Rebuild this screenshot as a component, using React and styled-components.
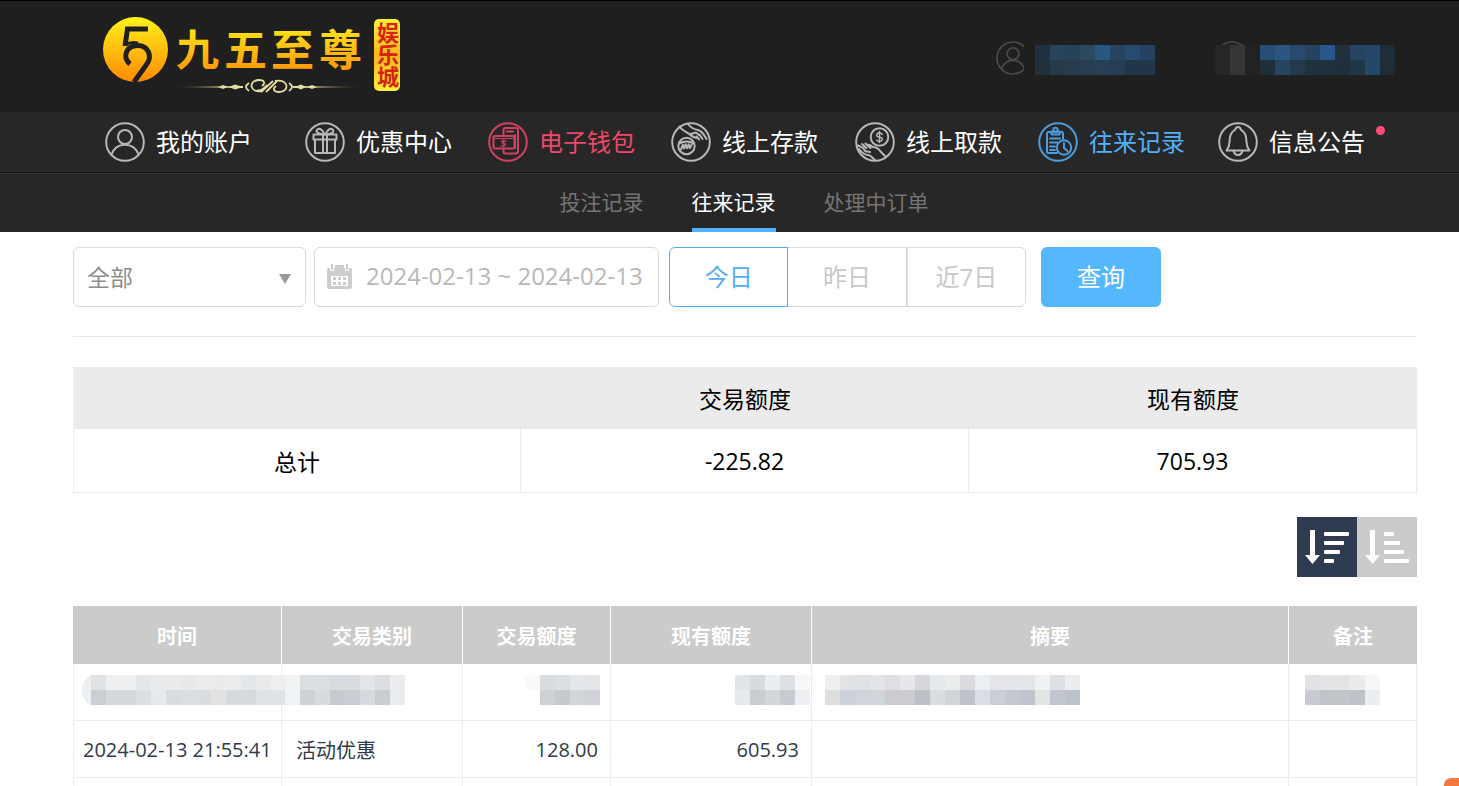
import { useState } from 'react';
import styled, { createGlobalStyle } from 'styled-components';

const NAV_ITEMS = [
  { label: '我的账户', icon: 'user' },
  { label: '优惠中心', icon: 'gift' },
  { label: '电子钱包', icon: 'wallet', color: '#f0476a' },
  { label: '线上存款', icon: 'deposit' },
  { label: '线上取款', icon: 'withdraw' },
  { label: '往来记录', icon: 'record', color: '#53b1fb' },
  { label: '信息公告', icon: 'bell', hasNews: true },
];

const TABS = ['投注记录', '往来记录', '处理中订单'];
const RANGES = ['今日', '昨日', '近7日'];

// widths are shared out in proportion over the full table width
const COLUMNS = [
  { title: '时间', width: 209 },
  { title: '交易类别', width: 181 },
  { title: '交易额度', width: 148, align: 'right' },
  { title: '现有额度', width: 201, align: 'right' },
  { title: '摘要', width: 477 },
  { title: '备注', width: 128 },
];

// every mosaic is two rows of colours, one entry per block
const ACCOUNT_BLOCKS = [
  '203040 27445c 264258 2b4a5e 295780 264460 264b73 254260',
  '22303a 263a4a 263c4e 273e50 264056 263e54 22364a 22364a',
];

const BALANCE_BLOCKS = [
  '262626 363636 222222 274e74 2a5680 274a6e 254260 28588a 20303c 264462 26466a 202e3c',
  '262626 363636 222222 202e3a 264460 243a4a 20323e 20323e 20303a 22364a 264868 202c38',
];

const HIDDEN_ROW = [
  {
    inset: 8,
    lead: '#eeeff1',
    rows: [
      'e0e3e5 efefef eeeff0 e3e7ea e9eaeb e9ebec e8e9ea ececec e9ebec eaeced e4e7e9 e8eaec eceef0',
      'c9cfd4 d6d9dc d4d9dd dbdfe2 e7e9ea d9dcdf dadee0 dadde0 e3e2e0 d6dadd d5dadf dfe3e6 e0e3e6',
    ],
  },
  {
    inset: 3,
    rows: [
      'f1f2f2 dcdfe2 dcdfe1 d8dbdf d9dce0 e3e5e8 dadee2 ececef',
      'f0f2f3 ced2d6 d7dbdf c7cbd0 c7cdd2 d6dade c9cdd2 eaecef',
    ],
  },
  {
    inset: 10,
    rows: ['fafafa d9dcdf d9dfe2 e5e8ea e3e5e8', 'ffffff ced1d3 c4cacf d2d6d8 cfd2d7'],
  },
  {
    inset: 1,
    rows: ['e0e4e6 d8dbde ebeef0 dde0e4 f6f7f9', 'e8e9eb c9cdd1 d2d7dc c8cbd1 eceef2'],
  },
  {
    inset: 13,
    rows: [
      'eeeeef e1e3e5 dfe2e4 e2e4e7 dedfe2 e6e7ea d5d7db e6e9ec ebecec d9dbe0 eceff2 e3e5e9 e3e5e8 e3e6e9 f0f1f2 dde0e4 ebedf0',
      'dddddd cdd2da d0d5dc d0d6da cccccf cacccf bdc0c6 d9dce1 d3d4d8 bfc3c9 d9dfe5 cacfd6 c3c9cf bfc5cc e3e4e4 c1c7cd bdc3ca',
    ],
  },
  {
    inset: 16,
    rows: ['e0e2e5 e2e4e6 e2e4e6 eaebed f6f7f9', 'c8cbd2 bfc4c9 c0c6c9 bdc3c8 ecedf0'],
  },
];

const ICONS = {
  user: (
    <>
      <circle cx="20" cy="15" r="7" />
      <path d="M6.5 32.5C9 26 14 22.8 20 22.8S31 26 33.5 32.5" />
    </>
  ),
  gift: (
    <>
      <path d="M8.5 12.5h23v5h-23zM10 17.5h20V31H10zM18 12.5V31M22 12.5V31" />
      <path d="M18.5 12.5C12 12 10.5 9.5 12.5 7.5S18 8 19.5 12.5M21.5 12.5C28 12 29.5 9.5 27.5 7.5S22 8 20.5 12.5" />
    </>
  ),
  wallet: (
    <>
      <path d="M15.5 13V8q0-2 2-2h10.500q2 0 2 2v21.500q0 2-2 2H17.500q-2 0-2-2V27" />
      <path d="M19 9.5h6M27 13v13" />
      <rect x="5.5" y="14" width="21" height="12.5" rx="1.5" />
      <path d="M5.5 16.5h21M18 19.3q-3-1.6-4 0t1.5 2 1.5 2-3.8.4M15.7 17.8v7" strokeWidth="1.2" />
    </>
  ),
  deposit: (
    <>
      <circle cx="15.5" cy="24" r="8.2" />
      <path d="M8 21.5q7.5-4 15.2 0M10 27.5l1.8-5 1.2 4 1.8-4.3 1.2 4 1.800-4 1 4 1.800-3.500" />
      <path d="M8.5 4.5C12 10 16 9.5 19 12.5c2 2 5.5 3.5 8 3.5M17 2c3 4 7 5.5 10 6 4 .8 6 4.500 8.500 9M19.500 12l5.500-1.500 3.500 3M25.500 14.500l2.500 3M28.500 12.500l3 4.500" />
    </>
  ),
  withdraw: (
    <>
      <circle cx="24.5" cy="15" r="8.8" />
      <path d="M27.3 12.3q-3.5-2.8-5.2-.3t2.5 3.2 2.2 3.2-5-.2M24.5 9.5v11" strokeWidth="1.5" />
      <path d="M3 23.5l5 2.3 2.5 3.5 4.500.7M7 22l4.500 4M10.500 21.500l5 4.500M13 23q2-1 4.500 2 5 0 8 4.500l4.500 4.500M4 27q4 6 11 6.500l5 4.500" />
    </>
  ),
  record: (
    <>
      <path d="M19 31H10.500Q9 31 9 29.500v-18Q9 10 10.500 10H14M21 10h2.500q1.500 0 1.500 1.500V17M13.500 9.500h8V12.500h-8z" />
      <circle cx="17.5" cy="8" r="2.2" />
      <path d="M12 16.5h10M12 20.5h7M12 24.5h5M12 28h5" />
      <circle cx="26" cy="25.5" r="7.2" />
      <path d="M26 21v5l3.5 3" />
    </>
  ),
  bell: (
    <>
      <path d="M8.500 28.500q3-4 3-8.500 0-9.500 5.500-12.200 1-2.800 3-2.800t3 2.800q5.500 2.700 5.500 12.200 0 4.500 3 8.500z" />
      <path d="M15.500 28.800q1 4.200 4.500 4.200t4.500-4.200" />
    </>
  ),
};

const CircleIcon = ({ name }) => (
  <IconSvg viewBox="0 0 40 40" aria-hidden="true">
    <circle cx="20" cy="20" r="18.8" />
    {ICONS[name]}
  </IconSvg>
);

const Mosaic = ({ rows, lead }) => {
  const colors = rows.map((row) => row.split(' '));
  const start = lead ? 9 : 0;
  const width = colors[0].length * 15 + start;

  return (
    <MosaicSvg width={width} height="30" viewBox={`0 0 ${width} 30`} aria-hidden="true">
      {lead && <path d="M9 0C3 3 0 9 0 15s3 12 9 15z" fill={lead} />}
      {colors.map((row, y) => row.map((color, x) => (
        <rect key={`${x}-${y}`} x={start + x * 15} y={y * 15} width="15" height="15" fill={`#${color}`} />
      )))}
    </MosaicSvg>
  );
};

const Logo = () => (
  <LogoSvg viewBox="0 0 300 80" role="img" aria-label="九五至尊娱乐城">
    <defs>
      <linearGradient id="gold" x1="0" y1="0" x2="0" y2="1">
        <stop offset="0" stopColor="#fff21a" />
        <stop offset="0.5" stopColor="#ffbe10" />
        <stop offset="1" stopColor="#ff8a00" />
      </linearGradient>
      <linearGradient id="plate" x1="0" y1="0" x2="0" y2="1">
        <stop offset="0" stopColor="#fff23a" />
        <stop offset="0.5" stopColor="#f7b51c" />
        <stop offset="1" stopColor="#fff23a" />
      </linearGradient>
      <linearGradient id="line" x1="0" y1="0" x2="1" y2="0">
        <stop offset="0" stopColor="#c9b87c" stopOpacity="0.3" />
        <stop offset="0.3" stopColor="#e9dfa4" />
        <stop offset="0.7" stopColor="#e9dfa4" />
        <stop offset="1" stopColor="#c9b87c" stopOpacity="0.3" />
      </linearGradient>
    </defs>
    <circle cx="32.5" cy="32.5" r="32.5" fill="url(#gold)" />
    <g fill="none" stroke="#1f1f1f" strokeWidth="5">
      <path d="M45 12H24.500L22 29" />
      <path d="M22 28C26 25.500 31 25 35 26" strokeWidth="3" />
      <path d="M27 47C19 40 23 29 34 28.500S50 39 43.500 47.500L31 65" />
    </g>
    <g fill="url(#gold)" fontSize="43" fontWeight="700">
      <text x="73" y="49">九</text>
      <text x="121" y="49">五</text>
      <text x="168" y="49">至</text>
      <text x="216" y="49">尊</text>
    </g>
    <path d="M74 70L140 69v2zM190 69l66 1-66 1z" fill="url(#line)" />
    <g fill="none" stroke="#e6dca6" strokeWidth="1.8">
      <path d="M146 74q-6-4 0-8M186 66q6 4 0 8" />
      <path d="M160 74c-14 3-15-11-4-11 5 0 7 3 3 6M172 64c14-3 15 11 4 11-5 0-7-3-3-6M158 75L170 64M163 75l11-11M154 73q4 2 10-5" />
    </g>
    <path d="M115 70l5-2 5 2-5 2zM126 70l6-2.500 8 2.500-8 2.500zM214 70l-5-2-5 2 5 2zM203 70l-5-2.500-6 2.500 6 2.500z" fill="#e6dca6" />
    <rect x="271" y="2" width="26" height="72" rx="5" fill="url(#plate)" />
    <VerticalText x="284" y="5">娱乐城</VerticalText>
  </LogoSvg>
);

const CalendarIcon = () => (
  <CalendarSvg viewBox="0 0 25 26" aria-hidden="true">
    <path d="M2 4h21q2 0 2 2v17q0 2-2 2H2q-2 0-2-2V6q0-2 2-2z" fill="#cdcdcd" />
    <path d="M4 12h17v10H4z" fill="#fff" />
    <path d="M3 0h4v7H3zM18 0h4v7h-4z" fill="#fff" />
    <path d="M4 0h2v6H4zM8 1h9v5H8zM19 0h2v6h-2z" fill="#cdcdcd" />
    <path d="M6 13h3v3H6zM11 13h3v3h-3zM16 13h3v3h-3zM6 18h3v3H6zM11 18h3v3h-3zM16 18h3v3h-3z" fill="#cdcdcd" />
  </CalendarSvg>
);

const SortIcon = ({ widths }) => (
  <svg width="60" height="60" viewBox="0 0 60 60" fill="#fff" aria-hidden="true">
    <path d="M13 13h5v25h5l-7.500 9L8 38h5z" />
    {widths.map((width, i) => (
      <rect key={width} x="27" y={15 + i * 9} width={width} height="4" rx="1" />
    ))}
  </svg>
);

const App = () => {
  const [tab, setTab] = useState('往来记录');
  const [range, setRange] = useState('今日');
  const [order, setOrder] = useState('desc');

  return (
    <Page>
      <GlobalStyle />
      <Header>
        <TopBar>
          <a href="#home"><Logo /></a>
          <Account>
            <AccountLink href="#account" aria-label="我的账户">
              <AccountIcon><CircleIcon name="user" /></AccountIcon>
              <Mosaic rows={ACCOUNT_BLOCKS} />
            </AccountLink>
            <AccountLink href="#balance" aria-label="现有额度">
              <AccountIcon $covered><CircleIcon /></AccountIcon>
              <Mosaic rows={BALANCE_BLOCKS} />
            </AccountLink>
          </Account>
        </TopBar>
        <Nav>
          {NAV_ITEMS.map((item) => (
            <NavLink key={item.label} href={`#${item.icon}`} $color={item.color}>
              <CircleIcon name={item.icon} />
              <span>{item.label}</span>
              {item.hasNews && <NewsDot />}
            </NavLink>
          ))}
        </Nav>
        <Tabs>
          {TABS.map((name) => (
            <Tab key={name} $active={name === tab} onClick={() => setTab(name)}>{name}</Tab>
          ))}
        </Tabs>
      </Header>
      <Content>
        <Filters>
          <SelectBox>
            <select aria-label="交易类别" defaultValue="全部">
              <option>全部</option>
              <option>活动优惠</option>
            </select>
            <svg width="12" height="10" viewBox="0 0 12 10" aria-hidden="true">
              <path d="M0 0h12L6 10z" fill="#999" />
            </svg>
          </SelectBox>
          <DateBox>
            <CalendarIcon />
            <input aria-label="时间" defaultValue="2024-02-13 ~ 2024-02-13" />
          </DateBox>
          <RangeGroup>
            {RANGES.map((name) => (
              <RangeButton key={name} $active={name === range} onClick={() => setRange(name)}>{name}</RangeButton>
            ))}
          </RangeGroup>
          <SearchButton>查询</SearchButton>
        </Filters>
        <SummaryTable>
          <thead>
            <tr>
              <th aria-label="总计" />
              <th>交易额度</th>
              <th>现有额度</th>
            </tr>
          </thead>
          <tbody>
            <tr>
              <td>总计</td>
              <td>-225.82</td>
              <td>705.93</td>
            </tr>
          </tbody>
        </SummaryTable>
        <SortBar>
          <SortButton aria-label="降序" $active={order === 'desc'} onClick={() => setOrder('desc')}>
            <SortIcon widths={[25, 20, 16, 10]} />
          </SortButton>
          <SortButton aria-label="升序" $active={order === 'asc'} onClick={() => setOrder('asc')}>
            <SortIcon widths={[10, 16, 20, 25]} />
          </SortButton>
        </SortBar>
        <RecordTable>
          <colgroup>
            {COLUMNS.map((column) => <col key={column.title} width={column.width} />)}
          </colgroup>
          <thead>
            <tr>
              {COLUMNS.map((column) => <th key={column.title}>{column.title}</th>)}
            </tr>
          </thead>
          <tbody>
            <tr>
              {HIDDEN_ROW.map((cell, i) => (
                <MosaicCell key={COLUMNS[i].title} $align={COLUMNS[i].align} $inset={cell.inset}>
                  <Mosaic rows={cell.rows} lead={cell.lead} />
                </MosaicCell>
              ))}
            </tr>
            <tr>
              <TimeCell>2024-02-13 21:55:41</TimeCell>
              <RecordCell>活动优惠</RecordCell>
              <RecordCell $align="right">128.00</RecordCell>
              <RecordCell $align="right">605.93</RecordCell>
              <RecordCell />
              <RecordCell />
            </tr>
            <tr>
              {COLUMNS.map((column) => <RecordCell key={column.title} />)}
            </tr>
          </tbody>
        </RecordTable>
      </Content>
      <FloatingTag />
    </Page>
  );
};

const GlobalStyle = createGlobalStyle`
  * {
    box-sizing: border-box;
  }

  body {
    margin: 0;
    background-color: white;
    font-family: 'Open Sans', 'Noto Sans CJK SC', sans-serif;
  }

  button, input, select {
    font-family: inherit;
    margin: 0;
  }

  button {
    cursor: pointer;
  }

  a {
    text-decoration: none;
  }
`;

const Page = styled.div`
  height: 100vh;
  overflow: hidden;
`;

const Header = styled.header`
  background-color: #272727;
  border-top: 1px solid black;
`;

const TopBar = styled.div`
  height: 111px;
  padding: 0 64px 0 103px;
  display: flex;
  justify-content: space-between;
  background-color: #1f1f1f;
`;

const LogoSvg = styled.svg`
  display: block;
  width: 300px;
  height: 80px;
  margin-top: 16px;
`;

const VerticalText = styled.text`
  writing-mode: vertical-rl;
  fill: #d4250c;
  font-size: 22px;
  font-weight: 700;
`;

const Account = styled.div`
  display: flex;
  gap: 60px;
  height: 74px;
  align-items: flex-end;
`;

const AccountLink = styled.a`
  display: flex;
  align-items: flex-end;
  height: 34px;
`;

const AccountIcon = styled.span`
  width: ${(props) => props.$covered ? '34px' : '28px'};
  height: 34px;
  margin-right: ${(props) => props.$covered ? '-34px' : '11px'};
  overflow: hidden;
  color: #4a4a4a;

  svg {
    width: 34px;
    height: 34px;
  }
`;

const IconSvg = styled.svg`
  display: block;
  flex: none;
  width: 40px;
  height: 40px;
  fill: none;
  stroke: currentColor;
  stroke-width: 2;
  stroke-linecap: round;
  stroke-linejoin: round;
`;

const MosaicSvg = styled.svg`
  display: block;
  flex: none;
  position: relative;
  shape-rendering: crispEdges;
`;

const Nav = styled.nav`
  height: 61px;
  padding-left: 105px;
  display: grid;
  grid-template-columns: 200fr 183fr 183fr 184fr 183fr 180fr 241fr;
  align-items: center;
  border-bottom: 1px solid #131313;
`;

const NavLink = styled.a`
  display: flex;
  align-items: center;
  gap: 11px;
  color: ${(props) => props.$color || 'white'};
  font-size: 24px;
  line-height: 36px;
  white-space: nowrap;

  svg {
    color: ${(props) => props.$color || '#d2d2d2'};
    opacity: 0.85;
  }
`;

const NewsDot = styled.i`
  width: 9px;
  height: 9px;
  margin-bottom: 24px;
  border-radius: 50%;
  background-color: #ff4d75;
`;

const Tabs = styled.div`
  height: 59px;
  padding: 0 44px 0 73px;
  display: flex;
  justify-content: center;
  gap: 48px;
  border-top: 1px solid #333;
`;

const Tab = styled.button`
  padding: 0;
  border: none;
  border-bottom: 4px solid ${(props) => props.$active ? '#4fb3ff' : 'transparent'};
  background: none;
  color: ${(props) => props.$active ? 'white' : '#757575'};
  font-size: 21px;
`;

const Content = styled.main`
  padding: 15px 42px 0 73px;
`;

const Filters = styled.div`
  display: flex;
  padding-bottom: 29px;
  margin-bottom: 30px;
  border-bottom: 1px solid #e8e8e8;
`;

const SelectBox = styled.div`
  position: relative;
  width: 233px;
  margin-right: 8px;

  select {
    width: 100%;
    height: 60px;
    padding: 0 40px 0 13px;
    appearance: none;
    border: 1px solid #d9d9d9;
    border-radius: 6px;
    background-color: white;
    color: #8c8c8c;
    font-size: 23px;
  }

  svg {
    position: absolute;
    right: 15px;
    top: 27px;
    pointer-events: none;
  }
`;

const DateBox = styled.label`
  width: 345px;
  height: 60px;
  margin-right: 10px;
  padding: 0 8px 0 12px;
  display: flex;
  align-items: center;
  gap: 14px;
  border: 1px solid #d9d9d9;
  border-radius: 6px;

  input {
    flex: 1;
    min-width: 0;
    padding: 0 0 4px;
    border: none;
    outline: none;
    color: #b8b8b8;
    font-size: 24px;
  }
`;

const CalendarSvg = styled.svg`
  flex: none;
  width: 25px;
  height: 26px;
`;

const RangeGroup = styled.div`
  display: flex;
  width: 357px;
  margin-right: 15px;
`;

const RangeButton = styled.button`
  flex: 1;
  height: 60px;
  padding: 0 0 4px;
  border: 1px solid ${(props) => props.$active ? '#55adf0' : '#d9d9d9'};
  background-color: white;
  color: ${(props) => props.$active ? '#55adf7' : '#c8c8c8'};
  font-size: 24px;

  &:first-child {
    border-radius: 6px 0 0 6px;
  }

  &:last-child {
    border-radius: 0 6px 6px 0;
  }

  &:nth-child(2) {
    border-left: none;
  }
`;

const SearchButton = styled.button`
  width: 120px;
  height: 60px;
  padding: 0 0 4px;
  border: none;
  border-radius: 6px;
  background-color: #55b8ff;
  color: white;
  font-size: 24px;
`;

const SummaryTable = styled.table`
  width: 100%;
  table-layout: fixed;
  border-spacing: 0;
  font-size: 23px;
  text-align: center;

  th {
    height: 62px;
    padding: 0;
    background-color: #ebebeb;
    font-weight: 400;
  }

  td {
    height: 64px;
    padding: 0;
    border: 1px solid #ebebeb;
    border-width: 0 1px 1px 0;
  }

  td:first-child {
    border-left-width: 1px;
  }
`;

const SortBar = styled.div`
  display: flex;
  justify-content: flex-end;
  margin: 24px 0 29px;
`;

const SortButton = styled.button`
  width: 60px;
  height: 60px;
  padding: 0;
  border: none;
  background-color: ${(props) => props.$active ? '#2e3b50' : '#cbcbcb'};

  svg {
    display: block;
  }
`;

const RecordTable = styled.table`
  width: 100%;
  table-layout: fixed;
  border-spacing: 0;
  color: #2f3b4a;
  font-size: 20px;

  th {
    height: 58px;
    padding: 0;
    background-color: #cbcbcb;
    color: white;
    font-weight: 700;
  }

  th:not(:last-child) {
    border-right: 1px solid white;
  }

  td:first-child {
    border-left-width: 1px;
  }
`;

const RecordCell = styled.td`
  height: 57px;
  padding: 0 12px 0 14px;
  border: 1px solid #ebebeb;
  border-width: 0 1px 1px 0;
  text-align: ${(props) => props.$align || 'left'};
  white-space: nowrap;
`;

const TimeCell = styled(RecordCell)`
  padding: 0 0 0 9px;
`;

const MosaicCell = styled(RecordCell)`
  padding: 0 ${(props) => props.$inset}px 4px;

  svg {
    margin-left: ${(props) => props.$align === 'right' ? 'auto' : '0'};
  }
`;

const FloatingTag = styled.div`
  position: fixed;
  right: 0;
  bottom: 0;
  width: 15px;
  height: 8px;
  border-radius: 7px 0 0 0;
  background-color: #f5793f;
`;

export default App;
